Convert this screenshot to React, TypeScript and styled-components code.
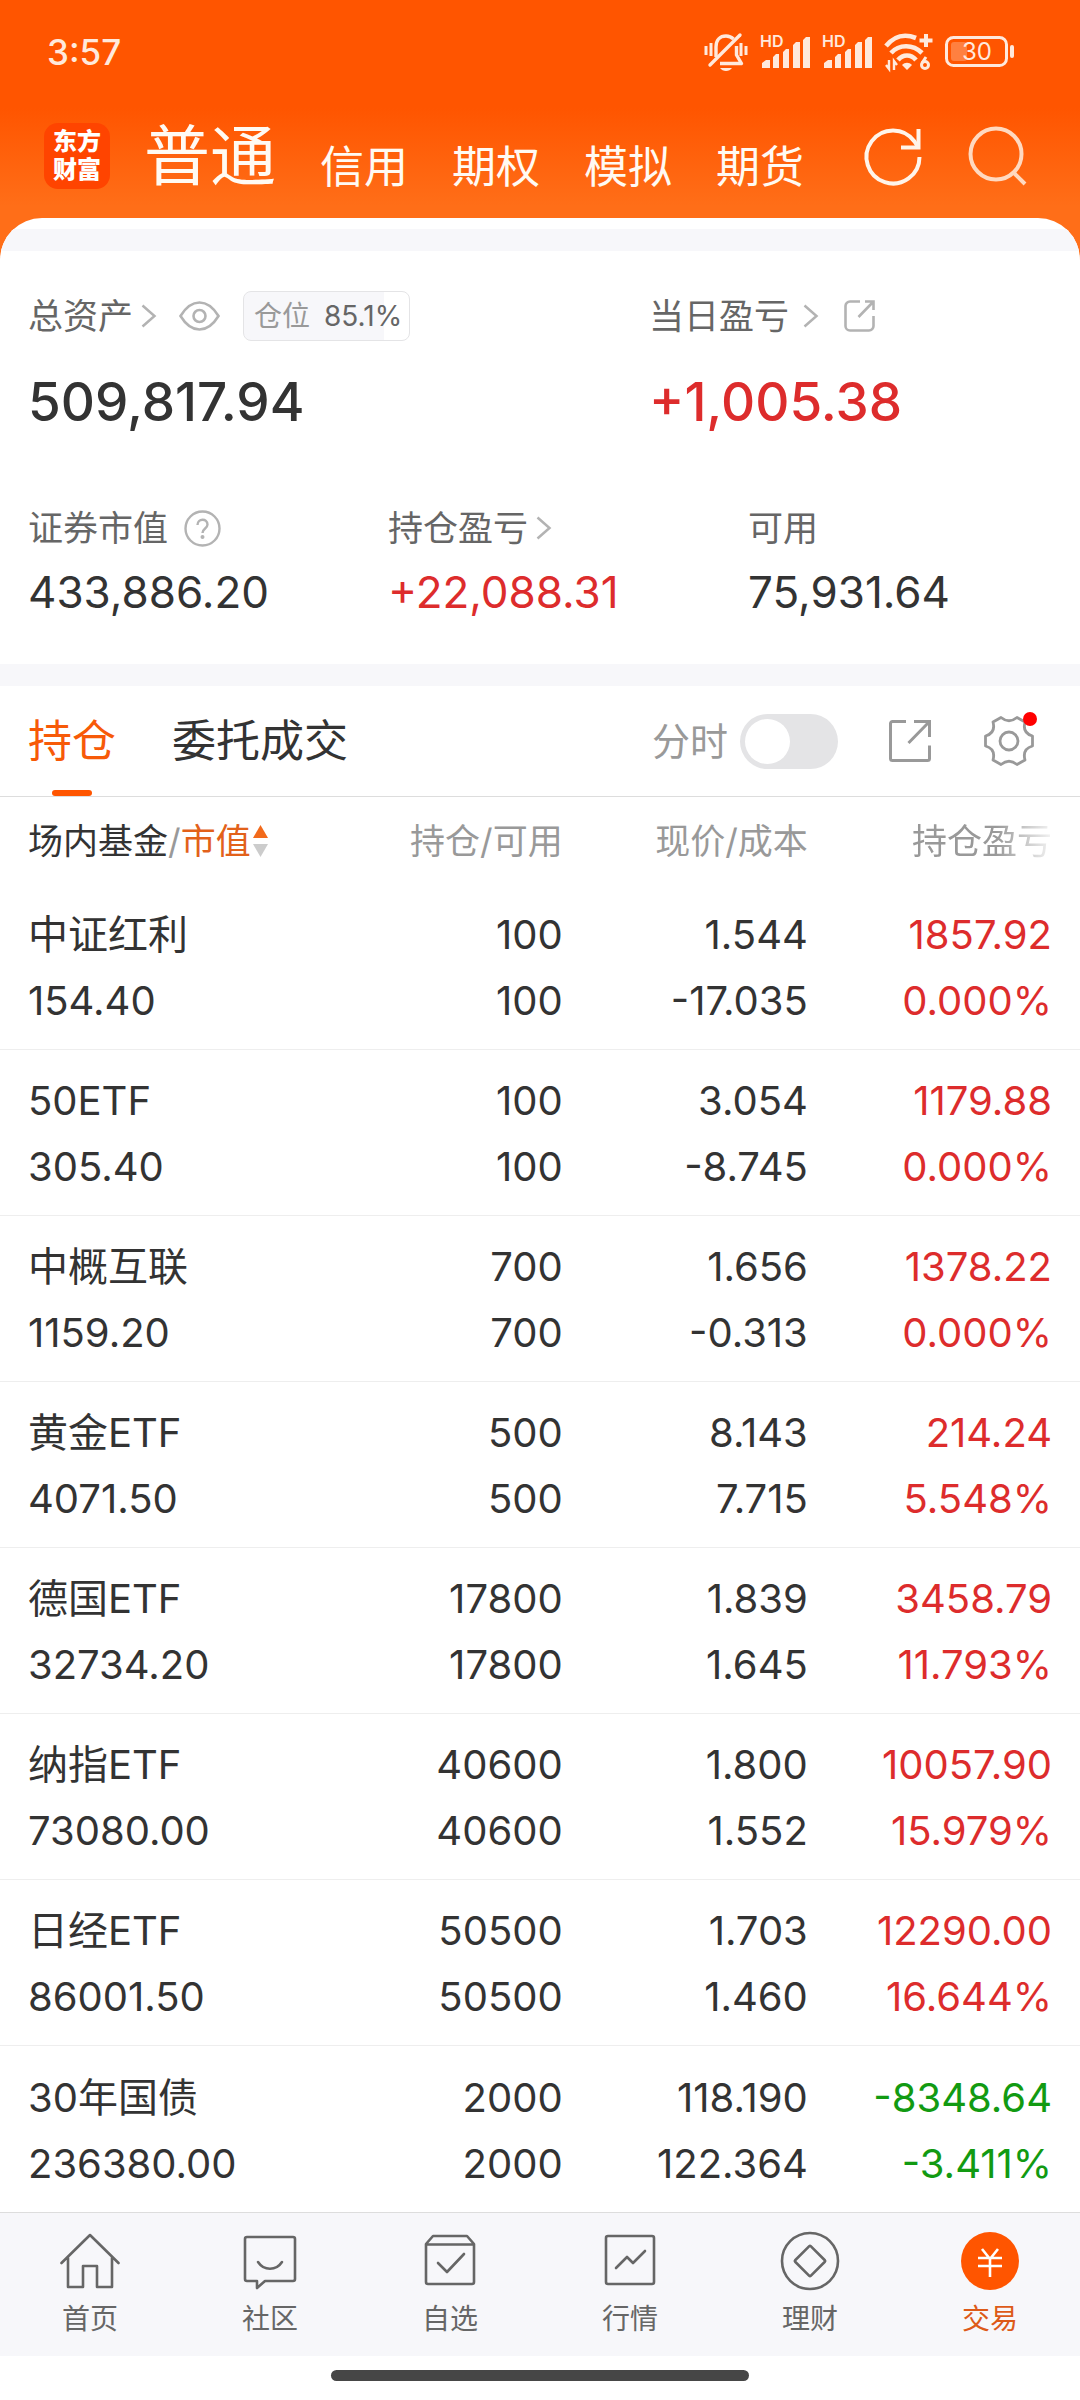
import React from 'react';
import styled, { createGlobalStyle } from 'styled-components';

const ORANGE = '#f75a08';
const RED = '#dd2c2c';
const GREEN = '#129a12';
const INK = '#333333';
const GREY = '#666666';
const PALE = '#999999';

const GlobalStyle = createGlobalStyle`
  * { box-sizing: border-box; }
  body { margin: 0; background: #ffffff; }
  body, button, input, table {
    font-family: Inter, "Noto Sans CJK SC", sans-serif;
    color: ${INK};
  }
  button {
    margin: 0;
    padding: 0;
    border: 0;
    background: none;
    font-size: inherit;
    line-height: inherit;
    text-align: inherit;
    cursor: pointer;
  }
  a { text-decoration: none; }
  svg { display: block; flex: none; overflow: visible; }
`;

const Screen = styled.div`
  display: flex;
  flex-direction: column;
  min-height: 100vh;
`;

const Header = styled.header`
  padding-bottom: 42px;
  background: linear-gradient(#ff5500 0, #ff5500 108px, #ff6e18 206px);
`;

const StatusBar = styled.div`
  display: flex;
  align-items: center;
  justify-content: space-between;
  height: 103px;
  padding: 0 66px 0 47px;
  color: #ffe9dc;
`;

const Clock = styled.time`
  font-size: 35px;
  font-weight: 500;
`;

const StatusIcons = styled.div`
  display: flex;
  align-items: center;
  gap: 12px;
`;

const TitleBar = styled.div`
  display: flex;
  align-items: center;
  height: 115px;
  padding: 0 52px 10px 44px;
`;

const Logo = styled.a`
  display: grid;
  place-content: center;
  width: 66px;
  height: 66px;
  border-radius: 14px;
  background: #ff4400;
  color: #ffffff;
  font-size: 24px;
  font-weight: 900;
  line-height: 28px;
  text-align: center;
`;

const Accounts = styled.nav`
  display: flex;
  flex: 1;
  align-items: flex-end;
  gap: 44px;
  margin-left: 34px;
`;

const Account = styled.button<{ $active?: boolean }>`
  color: #fffaf3;
  font-size: ${(p) => (p.$active ? 66 : 44)}px;
  line-height: 1;
`;

const HeaderActions = styled.div`
  display: flex;
  gap: 46px;

  button { color: #fff4ea; }
`;

const Sheet = styled.main`
  flex: 1;
  margin-top: -42px;
  padding-top: 11px;
  border-radius: 42px 42px 0 0;
  background: #ffffff;
  overflow: hidden;
`;

const Band = styled.div`
  height: 22px;
  background: #f7f7fa;
`;

const Assets = styled.section`
  padding: 35px 0 38px;
`;

const Totals = styled.div`
  display: grid;
  grid-template-columns: 23fr 17fr;
`;

const Details = styled.div`
  display: grid;
  grid-template-columns: repeat(3, 1fr);
  margin-top: 40px;
`;

const Stat = styled.div`
  padding-left: 28px;
`;

const StatLabel = styled.div<{ $gap?: number }>`
  display: flex;
  align-items: center;
  gap: ${(p) => p.$gap ?? 8}px;
  height: 60px;
  color: ${GREY};
  font-size: 35px;
  line-height: 48px;
  white-space: nowrap;
`;

const LabelLink = styled.button<{ $gap?: number }>`
  display: flex;
  align-items: center;
  gap: ${(p) => p.$gap ?? 8}px;
  color: ${GREY};
`;

const IconButton = styled.button`
  position: relative;
  color: #b3b3b3;
`;

const Amount = styled.div<{ $large?: boolean; $color?: string }>`
  font-size: ${(p) => (p.$large ? 53 : 44)}px;
  font-weight: ${(p) => (p.$large ? 500 : 400)};
  line-height: ${(p) => (p.$large ? 112 : 68)}px;
  color: ${(p) => p.$color ?? INK};
`;

const PositionBadge = styled.div<{ $percent: number }>`
  display: flex;
  align-items: center;
  gap: 14px;
  height: 50px;
  padding: 0 7px 0 10px;
  border: 1px solid #e4e4e6;
  border-radius: 8px;
  background: linear-gradient(to right, #f7f7fa ${(p) => p.$percent}%, #ffffff ${(p) => p.$percent}%);
  color: ${PALE};
  font-size: 28px;

  b {
    color: ${GREY};
    font-weight: 400;
  }
`;

const TabBar = styled.div`
  display: flex;
  align-items: stretch;
  justify-content: space-between;
  height: 111px;
  padding: 0 46px 0 28px;
  border-bottom: 1px solid #dddddd;
`;

const Tabs = styled.div`
  display: flex;
  gap: 56px;
`;

const Tab = styled.button<{ $active?: boolean }>`
  position: relative;
  font-size: 44px;
  line-height: 66px;
  color: ${(p) => (p.$active ? ORANGE : INK)};

  &::after {
    content: '';
    display: ${(p) => (p.$active ? 'block' : 'none')};
    position: absolute;
    bottom: 0;
    left: 50%;
    width: 40px;
    height: 6px;
    margin-left: -20px;
    border-radius: 3px;
    background: #ff5500;
  }
`;

const Tools = styled.div`
  display: flex;
  align-items: center;
`;

const ToggleLabel = styled.label`
  display: flex;
  align-items: center;
  gap: 12px;
  color: ${PALE};
  font-size: 38px;
  line-height: 48px;
`;

const Toggle = styled.input`
  appearance: none;
  width: 98px;
  height: 55px;
  margin: 0;
  padding: 5px;
  border-radius: 28px;
  background: #e4e4e6;

  &::before {
    content: '';
    display: block;
    width: 45px;
    height: 45px;
    border-radius: 50%;
    background: #ffffff;
  }

  &:checked {
    padding-left: 48px;
    background: #ff5500;
  }
`;

const ToolIcons = styled.div`
  display: flex;
  align-items: center;
  gap: 53px;
  margin-left: 51px;

  button { color: ${PALE}; }
`;

const Dot = styled.span`
  position: absolute;
  top: -4px;
  right: -3px;
  width: 14px;
  height: 14px;
  border-radius: 50%;
  background: #ff0000;
`;

const Holdings = styled.table`
  width: 100%;
  border-collapse: separate;
  border-spacing: 0;
  table-layout: fixed;
`;

const Col = styled.col<{ $share: number }>`
  width: ${(p) => p.$share}%;
`;

const HeadCell = styled.th<{ $fade?: boolean }>`
  height: 87px;
  padding: 0;
  color: ${PALE};
  font-size: 35px;
  font-weight: 400;
  line-height: 48px;
  text-align: right;
  white-space: nowrap;

  &:first-child { padding-left: 28px; text-align: left; }
  &:last-child { padding-right: 28px; }

  span {
    ${(p) => (p.$fade ? 'mask-image: linear-gradient(to right, #000 60%, transparent 105%);' : '')}
  }
`;

const SortButton = styled.button<{ $active?: boolean }>`
  display: inline-flex;
  align-items: center;
  gap: 2px;
  color: ${(p) => (p.$active ? '#e2611a' : INK)};
`;

const Row = styled.tr`
  &:not(:last-child) td { border-bottom: 1px solid #eeeeee; }
`;

const Cell = styled.td<{ $color?: string }>`
  height: 166px;
  padding: 3px 0 0;
  color: ${(p) => p.$color ?? INK};
  font-size: 40px;
  font-feature-settings: 'case';
  line-height: 66px;
  text-align: right;
  white-space: nowrap;

  &:first-child { padding-left: 28px; text-align: left; }
  &:last-child { padding-right: 28px; }
`;

const BottomNav = styled.nav`
  display: grid;
  grid-template-columns: repeat(6, 1fr);
  height: 144px;
  border-top: 1px solid #dddddd;
  background: #f7f7fa;
`;

const NavItem = styled.a<{ $active?: boolean }>`
  display: flex;
  flex-direction: column;
  align-items: center;
  gap: 8px;
  padding-top: 18px;
  color: ${(p) => (p.$active ? '#dd5a18' : GREY)};
  font-size: 28px;
  line-height: 40px;
`;

const HomeArea = styled.footer`
  display: flex;
  justify-content: center;
  height: 44px;
  padding-top: 14px;
`;

const HomeBar = styled.div`
  width: 418px;
  height: 11px;
  border-radius: 6px;
  background: #464646;
`;

const MutedBell = () => (
  <svg width="44" height="40" viewBox="0 0 44 40" fill="none" stroke="currentColor" strokeWidth="3.4">
    <path d="M12 25V15C12 8 16 4 22 4c3 0 5.500 1 7.500 3" />
    <path d="M32.500 14v9l5 8.500H16" strokeLinejoin="round" />
    <path d="M36 3 6 33" strokeLinecap="round" />
    <path d="M2 14v9M7 11v13M37 11v13M42 14v9" strokeWidth="3" />
    <path d="M16 36h12c-1.500 2-3.500 3-6 3s-4.500-1-6-3Z" fill="currentColor" stroke="none" />
  </svg>
);

const Signal = () => (
  <svg width="50" height="34" viewBox="0 0 50 34" fill="currentColor">
    <text x="0" y="12" fontSize="16" fontWeight="600" fontFamily="Inter, sans-serif">HD</text>
    <path d="M2 33v-5l4-3h4v8ZM13 33V22l3-3h3v14ZM23 33V17l3-3h3v19ZM33 33V10l3-3h4v26ZM43 33V5l3-3h4v31Z" />
  </svg>
);

const Wifi = () => (
  <svg width="49" height="38" viewBox="0 0 49 38" fill="none" stroke="currentColor" strokeWidth="4.600">
    <path d="M2 13C11 2 22 1 32 5" />
    <path d="M7 20C15 11 29 11 38 20" />
    <path d="M14 27c5-6 13-6 18 0" />
    <path d="m23 37-5-5c3-3 7-3 10 0Z" fill="currentColor" stroke="none" />
    <path d="M42 1v13M35.500 7.500h13" strokeWidth="4" />
    <path d="M5 27v9l-3-4M10 37v-9l3 4" strokeWidth="2.400" />
    <circle cx="41" cy="32" r="3.500" strokeWidth="3" />
    <path d="m42 24-4 6" strokeWidth="3" />
  </svg>
);

const Battery = () => (
  <svg width="69" height="31" viewBox="0 0 69 31" fill="none" stroke="currentColor">
    <rect x="1.500" y="1.500" width="60" height="28" rx="7" strokeWidth="3" />
    <rect x="6" y="6" width="16" height="19" rx="3" fill="#ff8040" stroke="none" />
    <path d="M67 11v9" strokeWidth="4" strokeLinecap="round" />
    <text x="32" y="24" textAnchor="middle" fontSize="24" fontFamily="Inter, sans-serif" fill="currentColor" stroke="none">30</text>
  </svg>
);

const Refresh = () => (
  <svg width="58" height="58" viewBox="0 0 58 58" fill="none" stroke="currentColor" strokeWidth="4">
    <path d="M55.500 30A26.500 26.500 0 1 1 50.500 14.500L54 20" />
    <path d="M54.500 2v18.500H37" />
  </svg>
);

const Search = () => (
  <svg width="60" height="60" viewBox="0 0 60 60" fill="none" stroke="#ffd9c0" strokeWidth="4">
    <circle cx="28" cy="28" r="25.500" />
    <path d="m45 46 12 12" />
  </svg>
);

const Chevron = () => (
  <svg width="15" height="24" viewBox="0 0 15 24" fill="none" stroke="#b3b3b3" strokeWidth="2.500">
    <path d="m1.500 1.500 12 10.500-12 10.500" />
  </svg>
);

const Eye = () => (
  <svg width="41" height="30" viewBox="0 0 41 30" fill="none" stroke="currentColor" strokeWidth="2.600">
    <path d="M1.500 15C7 6 13 1.500 20.500 1.500S34 6 39.500 15C34 24 28 28.500 20.500 28.500S7 24 1.500 15Z" />
    <circle cx="20.500" cy="15" r="6" />
  </svg>
);

const Help = () => (
  <svg width="37" height="37" viewBox="0 0 37 37" fill="none" stroke="currentColor" strokeWidth="2.400">
    <circle cx="18.500" cy="18.500" r="17" />
    <path d="M13.500 15c0-7 10-7 10-.5 0 4-5 4-5 8.500" />
    <circle cx="18.500" cy="27" r="2" fill="currentColor" stroke="none" />
  </svg>
);

const ShareSmall = () => (
  <svg width="31" height="32" viewBox="0 0 31 32" fill="none" stroke="currentColor" strokeWidth="2.600">
    <path d="M16 1.500H6A4.500 4.500 0 0 0 1.500 6v20A4.500 4.500 0 0 0 6 30.500h19a4.500 4.500 0 0 0 4.500-4.500V16" />
    <path d="M21 1.500h8.500V10M29 2 14.500 17" />
  </svg>
);

const ShareLarge = () => (
  <svg width="42" height="42" viewBox="0 0 42 42" fill="none" stroke="currentColor" strokeWidth="3">
    <path d="M17 1.500H3.500a2 2 0 0 0-2 2v35a2 2 0 0 0 2 2h35a2 2 0 0 0 2-2V25.500" />
    <path d="M25 1.500h15.500V17M40 2 19.500 23" />
  </svg>
);

const Gear = () => (
  <svg width="50" height="50" viewBox="0 0 50 50" fill="none" stroke="currentColor" strokeWidth="2.800" strokeLinejoin="round">
    <path d="M17 1.500Q25 8 33 1.500L41 6Q38 17 48.500 20V30Q38 33 41 44L33 48.500Q25 42 17 48.500L9 44Q12 33 1.500 30V20Q12 17 9 6Z" />
    <circle cx="25" cy="25" r="9" />
  </svg>
);

const SortArrows = () => (
  <svg width="15" height="32" viewBox="0 0 15 32">
    <path d="M7.500 0 15 13H0Z" fill="#f26a1b" />
    <path d="M7.500 32 0 19h15Z" fill="#cccccc" />
  </svg>
);

const NavIcon = ({ children }: { children: React.ReactNode }) => (
  <svg width="60" height="60" viewBox="0 0 60 60" fill="none" stroke="currentColor" strokeWidth="2.600" strokeLinejoin="round" strokeLinecap="round">
    {children}
  </svg>
);

const navItems = [
  { label: '首页', icon: <path d="M1.500 32 30 4l28.500 28M8 27v29h15V35h14v21h15V27" /> },
  {
    label: '社区',
    icon: (
      <>
        <path d="M7 6h46a2 2 0 0 1 2 2v40a2 2 0 0 1-2 2H25l-8 7v-7H7a2 2 0 0 1-2-2V8a2 2 0 0 1 2-2Z" />
        <path d="M18 31c6 9 18 9 24 0" />
      </>
    ),
  },
  {
    label: '自选',
    icon: (
      <>
        <path d="M6 13v38a2 2 0 0 0 2 2h44a2 2 0 0 0 2-2V13l-7-8H13ZM6 13.500h48" />
        <path d="m18 32 9 9 17-18" />
      </>
    ),
  },
  {
    label: '行情',
    icon: (
      <>
        <rect x="6" y="5" width="48" height="48" rx="2" />
        <path d="m16 37 11-11 6 6 12-12" />
      </>
    ),
  },
  {
    label: '理财',
    icon: (
      <>
        <circle cx="30" cy="30" r="28" />
        <rect x="19" y="19" width="22" height="22" rx="1" transform="rotate(45 30 30)" />
      </>
    ),
  },
  {
    label: '交易',
    active: true,
    icon: (
      <>
        <circle cx="30" cy="30" r="29" fill="#ff5500" stroke="none" />
        <path d="m22 18 8 10 8-10M18 27h24M18 35h24M30 27v19" stroke="#ffffff" strokeLinecap="butt" />
      </>
    ),
  },
];

const holdings = [
  ['中证红利', '154.40', '100', '100', '1.544', '-17.035', '1857.92', '0.000%'],
  ['50ETF', '305.40', '100', '100', '3.054', '-8.745', '1179.88', '0.000%'],
  ['中概互联', '1159.20', '700', '700', '1.656', '-0.313', '1378.22', '0.000%'],
  ['黄金ETF', '4071.50', '500', '500', '8.143', '7.715', '214.24', '5.548%'],
  ['德国ETF', '32734.20', '17800', '17800', '1.839', '1.645', '3458.79', '11.793%'],
  ['纳指ETF', '73080.00', '40600', '40600', '1.800', '1.552', '10057.90', '15.979%'],
  ['日经ETF', '86001.50', '50500', '50500', '1.703', '1.460', '12290.00', '16.644%'],
  ['30年国债', '236380.00', '2000', '2000', '118.190', '122.364', '-8348.64', '-3.411%'],
];

export default function App() {
  return (
    <Screen>
      <GlobalStyle />
      <Header>
        <StatusBar>
          <Clock>3:57</Clock>
          <StatusIcons>
            <MutedBell />
            <Signal />
            <Signal />
            <Wifi />
            <Battery />
          </StatusIcons>
        </StatusBar>
        <TitleBar>
          <Logo href="#home">
            <span>东方</span>
            <span>财富</span>
          </Logo>
          <Accounts>
            <Account $active>普通</Account>
            <Account>信用</Account>
            <Account>期权</Account>
            <Account>模拟</Account>
            <Account>期货</Account>
          </Accounts>
          <HeaderActions>
            <button aria-label="刷新"><Refresh /></button>
            <button aria-label="搜索"><Search /></button>
          </HeaderActions>
        </TitleBar>
      </Header>

      <Sheet>
        <Band />
        <Assets>
          <Totals>
            <Stat>
              <StatLabel $gap={23}>
                <LabelLink>总资产<Chevron /></LabelLink>
                <IconButton aria-label="隐藏金额"><Eye /></IconButton>
                <PositionBadge $percent={85.1}>仓位<b>85.1%</b></PositionBadge>
              </StatLabel>
              <Amount $large>509,817.94</Amount>
            </Stat>
            <Stat>
              <StatLabel $gap={26}>
                <LabelLink $gap={14}>当日盈亏<Chevron /></LabelLink>
                <IconButton aria-label="分享盈亏"><ShareSmall /></IconButton>
              </StatLabel>
              <Amount $large $color={RED}>+1,005.38</Amount>
            </Stat>
          </Totals>
          <Details>
            <Stat>
              <StatLabel $gap={16}>
                证券市值
                <IconButton aria-label="说明"><Help /></IconButton>
              </StatLabel>
              <Amount>433,886.20</Amount>
            </Stat>
            <Stat>
              <StatLabel>
                <LabelLink>持仓盈亏<Chevron /></LabelLink>
              </StatLabel>
              <Amount $color={RED}>+22,088.31</Amount>
            </Stat>
            <Stat>
              <StatLabel>可用</StatLabel>
              <Amount>75,931.64</Amount>
            </Stat>
          </Details>
        </Assets>
        <Band />

        <TabBar>
          <Tabs>
            <Tab $active>持仓</Tab>
            <Tab>委托成交</Tab>
          </Tabs>
          <Tools>
            <ToggleLabel>
              分时
              <Toggle type="checkbox" />
            </ToggleLabel>
            <ToolIcons>
              <IconButton aria-label="分享持仓"><ShareLarge /></IconButton>
              <IconButton aria-label="设置"><Gear /><Dot /></IconButton>
            </ToolIcons>
          </Tools>
        </TabBar>

        <Holdings>
          <colgroup>
            <Col $share={29.5} />
            <Col $share={22.6} />
            <Col $share={22.7} />
            <Col $share={25.2} />
          </colgroup>
          <thead>
            <tr>
              <HeadCell>
                <SortButton>场内基金</SortButton>/<SortButton $active>市值<SortArrows /></SortButton>
              </HeadCell>
              <HeadCell>持仓/可用</HeadCell>
              <HeadCell>现价/成本</HeadCell>
              <HeadCell $fade><span>持仓盈亏</span></HeadCell>
            </tr>
          </thead>
          <tbody>
            {holdings.map(([name, value, held, usable, price, cost, profit, rate]) => {
              const color = profit.startsWith('-') ? GREEN : RED;
              return (
                <Row key={name}>
                  <Cell>{name}<br />{value}</Cell>
                  <Cell>{held}<br />{usable}</Cell>
                  <Cell>{price}<br />{cost}</Cell>
                  <Cell $color={color}>{profit}<br />{rate}</Cell>
                </Row>
              );
            })}
          </tbody>
        </Holdings>
      </Sheet>

      <BottomNav>
        {navItems.map(({ label, icon, active }) => (
          <NavItem key={label} href={`#${label}`} $active={active}>
            <NavIcon>{icon}</NavIcon>
            {label}
          </NavItem>
        ))}
      </BottomNav>
      <HomeArea><HomeBar /></HomeArea>
    </Screen>
  );
}
